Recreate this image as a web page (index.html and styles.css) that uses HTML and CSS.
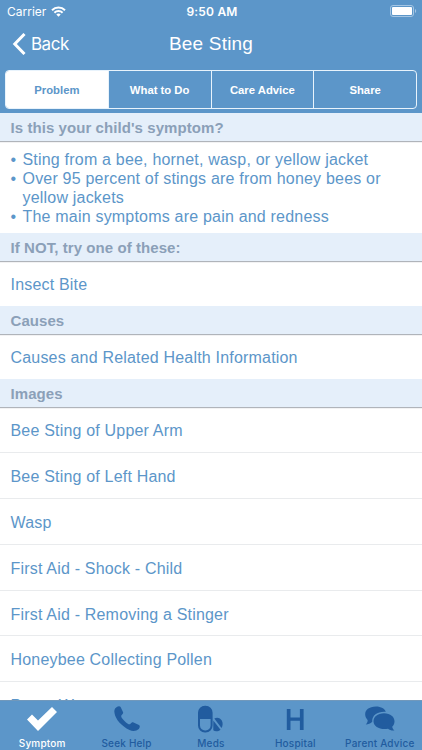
FILE: index.html
```
<!DOCTYPE html>
<html lang="en">
<head>
    <meta charset="UTF-8">
    <meta name="viewport" content="width=device-width, initial-scale=1.0">
    <title>Bee Sting</title>
    <link rel="stylesheet" href="styles.css">
</head>
<body>
    <div class="app">
        <header class="top">
            <div class="status">
                <div class="carrier">
                    <span>Carrier</span>
                    <svg width="15" height="11" viewBox="0 0 15 11" fill="none" stroke="#fff" stroke-width="2">
                        <path d="M1 4.2a9.2 9.2 0 0 1 13 0"/>
                        <path d="M3.4 6.7a5.8 5.8 0 0 1 8.2 0"/>
                        <path d="M5.3 8.5a3.1 3.1 0 0 1 4.4 0L7.5 10.8z" fill="#fff" stroke="none"/>
                    </svg>
                </div>
                <span class="time">9:50 AM</span>
                <svg class="battery" width="27" height="12" viewBox="0 0 27 12">
                    <rect x="0.5" y="0.5" width="23" height="11" rx="2.5" fill="none" stroke="#a5c6e4"/>
                    <rect x="2" y="2" width="20" height="8" rx="1" fill="#fff"/>
                    <path d="M25 4c1.6.6 1.6 3.4 0 4z" fill="#a5c6e4"/>
                </svg>
            </div>
            <nav class="navbar">
                <a class="back">
                    <svg width="14" height="22" viewBox="0 0 14 22" fill="none" stroke="#fff" stroke-width="3">
                        <path d="M12.500 1L2.800 11l9.700 10"/>
                    </svg>
                    <span>Back</span>
                </a>
                <h1>Bee Sting</h1>
            </nav>
            <div class="segments">
                <button class="active">Problem</button>
                <button>What to Do</button>
                <button>Care Advice</button>
                <button>Share</button>
            </div>
        </header>

        <main class="content">
            <h2>Is this your child's symptom?</h2>
            <ul class="symptoms">
                <li>Sting from a bee, hornet, wasp, or yellow jacket</li>
                <li>Over 95 percent of stings are from honey bees or yellow jackets</li>
                <li>The main symptoms are pain and redness</li>
            </ul>
            <h2>If NOT, try one of these:</h2>
            <div class="row">Insect Bite</div>
            <h2>Causes</h2>
            <div class="row">Causes and Related Health Information</div>
            <h2>Images</h2>
            <div class="row">Bee Sting of Upper Arm</div>
            <div class="row">Bee Sting of Left Hand</div>
            <div class="row">Wasp</div>
            <div class="row">First Aid - Shock - Child</div>
            <div class="row">First Aid - Removing a Stinger</div>
            <div class="row">Honeybee Collecting Pollen</div>
            <div class="row">Paper Wasp</div>
        </main>

        <nav class="tabs">
            <a class="tab active">
                <svg width="32" height="28" viewBox="0 0 32 28">
                    <path d="M1 14.5l5-5 6 6L26 2l5 5-19 19z" fill="currentColor"/>
                </svg>
                <span>Symptom</span>
            </a>
            <a class="tab">
                <svg width="28" height="28" viewBox="0 0 28 28">
                    <path d="M3.5 2.2C5 1 7 .9 7.6 2L10 7c.5 1-.1 2-1.500 3.200-1 .8.200 3 3 5.800s5 4 5.800 3c1.200-1.500 2.200-2 3.200-1.500l5.500 2.500c1.200.6 1 2.600-.2 4C23.500 26 20 26.600 16.500 25 8.500 21 2.500 14.500 1.500 8 1 5.500 1.500 3.500 3.500 2.200z" fill="currentColor"/>
                </svg>
                <span>Seek Help</span>
            </a>
            <a class="tab">
                <svg width="28" height="28" viewBox="0 0 28 28">
                    <rect x="2" y="1.700" width="12.600" height="24.800" rx="6" fill="none" stroke="currentColor" stroke-width="2"/>
                    <path d="M1.500 14V8a6.500 6.500 0 0 1 13.500 0v6z" fill="currentColor"/>
                    <path d="M17.300 13.400c3-1.600 6.200-.4 7.500 2.200 1.400 2.700.9 5.700-.3 7.400zM16.300 15.500l7.200 9.300c-2.500 2-5.500 2-7.200.4z" fill="currentColor"/>
                </svg>
                <span>Meds</span>
            </a>
            <a class="tab">
                <svg width="28" height="28" viewBox="0 0 28 28">
                    <path d="M5.800 4h3.700v8.400h9.400V4h3.700v21h-3.700v-9.300H9.500V25H5.800z" fill="currentColor"/>
                </svg>
                <span>Hospital</span>
            </a>
            <a class="tab">
                <svg width="32" height="28" viewBox="0 0 32 28">
                    <path d="M12 1.500c5 0 9 2.300 9.800 5.200C13.500 6 7.500 10.500 8.300 16.800c-2 2-4 2.700-6.500 2.700 1.500-1.500 2-3 1.800-4.500C-1.500 9.500 1.500 1.500 12 1.500z" fill="currentColor"/>
                    <path d="M20 8.200c6.500 0 10.500 3.700 10.500 8 0 2.500-1 4.300-2.300 5.500.2 1.500 1 2.800 2.300 3.800-3 .2-5-.5-6.500-1.800-7.500 1.500-14.500-2-14.500-7.500 0-4.300 4-8 10.500-8z" fill="currentColor"/>
                </svg>
                <span>Parent Advice</span>
            </a>
        </nav>
    </div>
</body>
</html>
```
FILE: styles.css
```
* {
    box-sizing: border-box;
}

body {
    margin: 0;
    font-family: "Liberation Sans", Arial, sans-serif;
    color: #5c96c9;
}

.app {
    display: flex;
    flex-direction: column;
    width: 422px;
    height: 750px;
    overflow: hidden;
    background: #fff;
}

.top {
    flex: none;
    height: 113px;
    background: #5c96c9;
    color: #fff;
}

.status {
    display: grid;
    grid-template-columns: 1fr auto 1fr;
    align-items: center;
    height: 22px;
    padding: 0 5px 0 7px;
    font-family: Inter, sans-serif;
    font-size: 12px;
}

.carrier {
    display: flex;
    align-items: center;
    gap: 5px;
}

.time {
    font-weight: 600;
    letter-spacing: 0.2px;
}

.battery {
    justify-self: end;
}

.navbar {
    display: grid;
    grid-template-columns: 1fr auto 1fr;
    align-items: center;
    height: 43px;
    padding: 0 12px;
}

.back {
    display: flex;
    align-items: center;
    gap: 5px;
    font-family: Inter, sans-serif;
    font-size: 17px;
    letter-spacing: -0.5px;
}

.navbar h1 {
    margin: 0;
    font-size: 19px;
    font-weight: normal;
    letter-spacing: 0.2px;
}

.segments {
    display: flex;
    height: 39px;
    margin: 5px 5px 0;
    border: 1px solid #e8f3fc;
    border-radius: 4px;
    overflow: hidden;
}

.segments button {
    flex: 1;
    padding: 0;
    border: none;
    border-left: 1px solid #e8f3fc;
    background: none;
    color: #fff;
    font-family: inherit;
    font-size: 11.3px;
    font-weight: bold;
}

.segments button:first-child {
    border-left: none;
}

.segments button.active {
    background: #fff;
    color: #5c96c9;
}

.content {
    flex: 1;
    min-height: 0;
    overflow: hidden;
}

.content h2 {
    position: relative;
    height: 28px;
    margin: 0;
    padding-left: 10.5px;
    background: #e5effa;
    box-shadow: 0 1px 1px #b0b4ba;
    color: #8ba0b8;
    font-size: 15px;
    letter-spacing: 0.07px;
    line-height: 29px;
}

.symptoms {
    height: 92px;
    margin: 0;
    padding: 9px 30px 0 22.5px;
    list-style: none;
    font-size: 16px;
    letter-spacing: 0.2px;
    line-height: 19px;
}

.symptoms li::before {
    content: "•";
    float: left;
    margin-left: -12px;
}

.row {
    height: 45.8px;
    padding-left: 10.5px;
    border-bottom: 1px solid #e9ebed;
    font-size: 16px;
    letter-spacing: 0.19px;
    line-height: 47px;
}

.row:has(+ h2) {
    height: 45.2px;
    border-bottom: none;
}

.tabs {
    display: grid;
    grid-template-columns: repeat(5, 1fr);
    flex: none;
    height: 50.5px;
    border-top: 1px solid #7198bb;
    background: #5c96c9;
    color: #215c9f;
}

.tab {
    display: flex;
    flex-direction: column;
    align-items: center;
    padding-top: 4px;
    font-family: Inter, sans-serif;
    font-size: 10px;
    font-weight: 500;
    letter-spacing: 0.2px;
    line-height: 20px;
    white-space: nowrap;
}

.tab svg {
    flex: none;
}

.tab.active {
    color: #fff;
}
```
